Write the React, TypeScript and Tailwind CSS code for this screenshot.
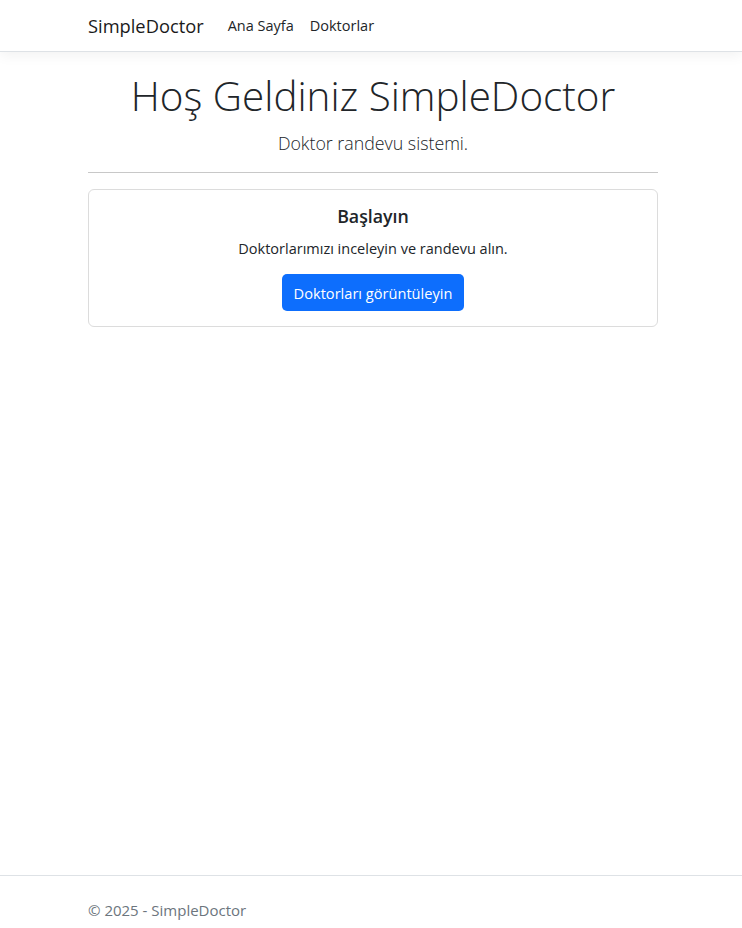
export default function App() {
    const font = { fontFamily: '"Open Sans", "Noto Sans", sans-serif' };

    return (
        <div className="min-h-[928px] flex flex-col bg-white text-[#212529]" style={font}>

            {/* navbar */}
            <nav className="h-[52px] border-b border-[#dee2e6] bg-white shadow-[0_4px_12px_rgba(0,0,0,0.05)]">
                <div className="ml-[88px] h-full flex items-center">
                    <span className="text-[18.3px] leading-[30px] text-[#1a1a1a] mr-[24px]">SimpleDoctor</span>
                    <a className="text-[14.5px] leading-[24px] text-[#212529] mr-[16px]">Ana Sayfa</a>
                    <a className="text-[14.5px] leading-[24px] text-[#212529]">Doktorlar</a>
                </div>
            </nav>

            {/* main */}
            <main className="ml-[88px] w-[570px] pt-[18px]">
                <div className="text-center">
                    <h1 className="text-[40.4px] leading-[52px] font-light mb-[6px]">Hoş Geldiniz SimpleDoctor</h1>
                    <p className="text-[17.8px] leading-[30px] font-light mb-[14px]">Doktor randevu sistemi.</p>
                </div>
                <hr className="border-t border-[#c8c8c8] mb-[16px]" />

                {/* card */}
                <div className="border border-[#dcdcdc] rounded-[6px] px-[16px] pt-[14px] pb-[15px] text-center">
                    <h5 className="text-[17.8px] leading-[24px] font-semibold mb-[9px]">Başlayın</h5>
                    <p className="text-[14.5px] leading-[24px] mb-[13px]">Doktorlarımızı inceleyin ve randevu alın.</p>
                    <button className="bg-[#0d6efd] text-white text-[14.6px] leading-[24px] px-[12px] py-[6px] rounded-[5px] h-[37px]">
                        Doktorları görüntüleyin
                    </button>
                </div>
            </main>

            <div className="flex-1" />

            {/* footer */}
            <footer className="border-t border-[#dee2e6] h-[53px]">
                <div className="ml-[88px] pt-[22px] text-[15px] leading-[24px] text-[#6c757d]">
                    © 2025 - SimpleDoctor
                </div>
            </footer>
        </div>
    );
}
